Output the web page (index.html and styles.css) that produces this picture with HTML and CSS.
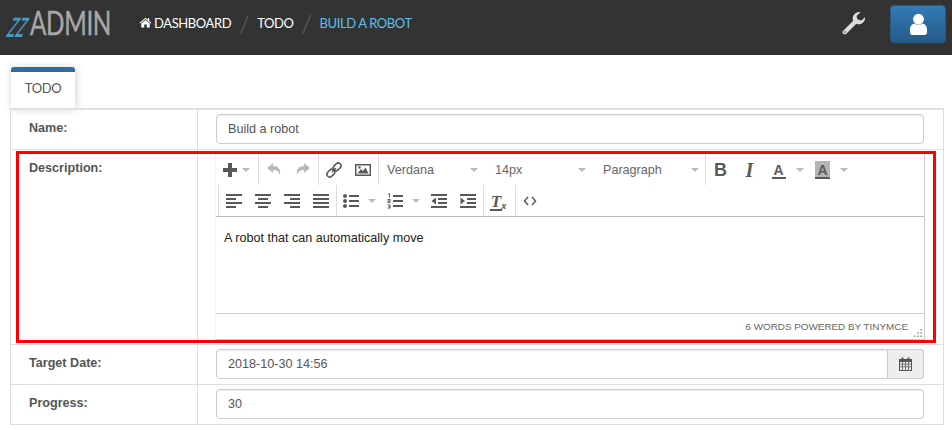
FILE: index.html
```html
<!DOCTYPE html>
<html lang="en">
<head>
    <meta charset="UTF-8">
    <title>Build a robot</title>
    <link rel="stylesheet" href="styles.css">
</head>
<body>
    <div class="navbar">
        <div class="logo"><span class="logo-zz">zz</span><span class="logo-admin">ADMIN</span></div>
        <ul class="crumbs">
            <li class="home-crumb">
                <svg class="home" viewBox="0 0 16 14"><path d="M8 1 L0.5 7.3 L1.3 8.3 L8 2.7 L14.7 8.3 L15.5 7.3 L12.8 5 V1.5 H11 V3.5 Z M8 3.8 L2.6 8.3 V13.5 H6.4 V9.6 H9.6 V13.5 H13.4 V8.3 Z" fill="#fff"/></svg>
                <span>DASHBOARD</span>
            </li>
            <li class="slash">/</li>
            <li>TODO</li>
            <li class="slash">/</li>
            <li class="active">BUILD A ROBOT</li>
        </ul>
        <svg class="wrench" viewBox="0 0 24 24">
            <path d="M2.800 21.200 L12.500 11.500" stroke="#ddd" stroke-width="4.400" stroke-linecap="round"/>
            <path d="M16.500 1 A6.500 6.500 0 0 0 11 9.500 L14.500 13 A6.500 6.500 0 0 0 23 6 L19.500 9.500 L15.500 8.500 L14.500 5 L18.500 1.300 A6.500 6.500 0 0 0 16.500 1 Z" fill="#ddd"/>
            <circle cx="3" cy="21" r="0.900" fill="#666"/>
        </svg>
        <button class="user-btn">
            <svg viewBox="0 0 20 24" width="19" height="23"><circle cx="10" cy="6.5" r="5.7" fill="#fff"/><path d="M1 18 C1 14 3 11.5 5.5 11 C8 13 12 13 14.5 11 C17 11.500 19 14 19 18 V20 C19 22 18 23 16 23 H4 C2 23 1 22 1 20 Z" fill="#fff"/></svg>
        </button>
    </div>

    <div class="tabs"><div class="tab">TODO</div></div>

    <div class="form-table">
        <div class="row">
            <div class="label">Name:</div>
            <div class="field"><input class="input" value="Build a robot"></div>
        </div>

        <div class="row row-desc">
            <div class="label">Description:</div>
            <div class="field">
                <div class="editor">
                    <div class="toolbar">
                        <div class="tb-row">
                            <div class="group g-plus">
                                <span class="btn">
                                    <svg class="ico" viewBox="0 0 16 16"><path d="M6 1h4v5h5v4h-5v5H6v-5H1V6h5z"/></svg>
                                </span>
                                <span class="caret"></span>
                            </div>
                            <div class="group g-pair">
                                <span class="btn"><svg class="ico faded" viewBox="0 0 16 16"><path d="M1 6 L7 1 V4 C12 4 15 7 14 13 C13 9.500 11 8 7 8 V11 Z"/></svg></span>
                                <span class="btn"><svg class="ico faded" viewBox="0 0 16 16"><path d="M15 6 L9 1 V4 C4 4 1 7 2 13 C3 9.500 5 8 9 8 V11 Z"/></svg></span>
                            </div>
                            <div class="group g-pair">
                                <span class="btn"><svg class="ico" viewBox="0 0 16 16"><g fill="none" stroke="#595959" stroke-width="1.600"><rect x="7" y="2.200" width="8.500" height="5.600" rx="2.700" transform="rotate(-45 11 5)"/><rect x="0.500" y="8.200" width="8.500" height="5.600" rx="2.700" transform="rotate(-45 5 11)"/><path d="M6 10 L10 6"/></g></svg></span>
                                <span class="btn"><svg class="ico" viewBox="0 0 16 16"><path fill-rule="evenodd" d="M0 2h16v12H0z M1.500 3.500v9h13v-9z"/><path d="M2.500 11.500 L6 7 L8 9 L10.500 5.500 L13.500 11.500 Z"/><circle cx="4.500" cy="5.500" r="1.200"/></svg></span>
                            </div>
                            <div class="group g-selects">
                                <div class="select s-font">Verdana<span class="caret"></span></div>
                                <div class="select s-size">14px<span class="caret"></span></div>
                                <div class="select s-block">Paragraph<span class="caret"></span></div>
                            </div>
                            <div class="group g-format no-sep">
                                <span class="btn glyph bold">B</span>
                                <span class="btn glyph ital">I</span>
                                <span class="btn glyph color">A</span>
                                <span class="caret c-tight"></span>
                                <span class="btn glyph back">A</span>
                                <span class="caret c-tight"></span>
                            </div>
                        </div>
                        <div class="tb-row tb-second">
                            <div class="group">
                                <span class="btn"><svg class="ico" viewBox="0 0 16 16"><path d="M0 1h16v2H0zM0 5h10v2H0zM0 9h16v2H0zM0 13h10v2H0z"/></svg></span>
                                <span class="btn"><svg class="ico" viewBox="0 0 16 16"><path d="M0 1h16v2H0zM3 5h10v2H3zM0 9h16v2H0zM3 13h10v2H3z"/></svg></span>
                                <span class="btn"><svg class="ico" viewBox="0 0 16 16"><path d="M0 1h16v2H0zM6 5h10v2H6zM0 9h16v2H0zM6 13h10v2H6z"/></svg></span>
                                <span class="btn"><svg class="ico" viewBox="0 0 16 16"><path d="M0 1h16v2H0zM0 5h16v2H0zM0 9h16v2H0zM0 13h16v2H0z"/></svg></span>
                            </div>
                            <div class="group">
                                <span class="btn"><svg class="ico" viewBox="0 0 16 16"><path d="M6 2h10v2H6zM6 7h10v2H6zM6 12h10v2H6z"/><circle cx="2" cy="3" r="2"/><circle cx="2" cy="8" r="2"/><circle cx="2" cy="13" r="2"/></svg></span>
                                <span class="caret c-tight"></span>
                                <span class="btn"><svg class="ico" viewBox="0 0 16 16"><path d="M6 2h10v2H6zM6 7h10v2H6zM6 12h10v2H6z"/><path d="M1 0.500h2v4H2V1.500H1zM0.500 6h3v2.500h-2V9h2v1h-3V7.500h2V7h-2zM0.500 11.500h3v4h-3v-1h2V14h-1v-1h1v-.5h-2z"/></svg></span>
                                <span class="caret c-tight"></span>
                                <span class="btn"><svg class="ico" viewBox="0 0 16 16"><path d="M0 1h16v2H0zM7 5h9v2H7zM7 9h9v2H7zM0 13h16v2H0zM5 4.500v7L0.500 8z"/></svg></span>
                                <span class="btn"><svg class="ico" viewBox="0 0 16 16"><path d="M0 1h16v2H0zM7 5h9v2H7zM7 9h9v2H7zM0 13h16v2H0zM0.500 4.500v7L5 8z"/></svg></span>
                            </div>
                            <div class="group g-clear">
                                <span class="btn glyph clear"><span class="clear-t">T</span><small>x</small></span>
                            </div>
                            <div class="group no-sep">
                                <span class="btn"><svg class="ico" viewBox="0 0 16 16"><path d="M6 4 L2.500 8 L6 12 M10 4 L13.500 8 L10 12" fill="none" stroke="#595959" stroke-width="1.500"/></svg></span>
                            </div>
                        </div>
                    </div>
                    <div class="edit-area">A robot that can automatically move</div>
                    <div class="statusbar">
                        <span>6 WORDS POWERED BY TINYMCE</span>
                        <svg class="grip" viewBox="0 0 10 10"><path d="M8 0h2v2H8zM8 4h2v2H8zM8 8h2v2H8zM4 4h2v2H4zM4 8h2v2H4zM0 8h2v2H0z"/></svg>
                    </div>
                </div>
            </div>
            <div class="highlight"></div>
        </div>

        <div class="row">
            <div class="label">Target Date:</div>
            <div class="field">
                <div class="input-group">
                    <input class="input date" value="2018-10-30 14:56">
                    <span class="addon"><svg viewBox="0 0 13 14" width="13" height="14"><path fill-rule="evenodd" d="M0 2h2.500V0.500h2V2h4V0.500h2V2H13v12H0z M1 5v1.800h2.200V5z M4 5v1.800h2.200V5z M7 5v1.800h2.200V5z M10 5v1.800h2V5z M1 7.600v1.800h2.200V7.600z M4 7.600v1.800h2.200V7.600z M7 7.600v1.800h2.200V7.600z M10 7.600v1.800h2V7.600z M1 10.200V13h2.200v-2.800z M4 10.200V13h2.200v-2.800z M7 10.200V13h2.200v-2.800z M10 10.200V13h2v-2.800z" fill="#555"/></svg></span>
                </div>
            </div>
        </div>

        <div class="row">
            <div class="label">Progress:</div>
            <div class="field"><input class="input" value="30"></div>
        </div>
    </div>
</body>
</html>
```

FILE: styles.css
```css
body {
    margin: 0;
    font-family: "Liberation Sans", Arial, sans-serif;
    font-size: 12.6px;
    color: #555;
    background: #fff;
    overflow: hidden;
}

/* top bar */
.navbar {
    display: flex;
    align-items: center;
    height: 55px;
    background: #333;
}
.logo {
    display: flex;
    align-items: center;
    width: 139px;
    padding-left: 11px;
    box-sizing: border-box;
    height: 46px;
    margin-top: -9px;
}
.logo-zz {
    font-family: Lato, sans-serif;
    font-size: 19px;
    line-height: 24px;
    color: #4a9cc7;
    flex: none;
    margin-right: 2px;
    transform: skewX(-22deg) scaleY(2);
}
.logo-admin {
    font-family: Lato, sans-serif;
    font-size: 32px;
    line-height: 34px;
    letter-spacing: -0.5px;
    color: #a8a8a8;
    -webkit-text-stroke: 0.4px #a8a8a8;
    transform: scaleX(0.76);
    transform-origin: left center;
}
.crumbs {
    display: flex;
    align-items: center;
    list-style: none;
    margin: -10px 0 0;
    padding: 0;
    font-family: Lato, sans-serif;
    font-size: 13px;
    letter-spacing: -0.4px;
    color: #fff;
    flex: 1;
}
.crumbs .active { color: #5bc0f0; }
.crumbs .slash {
    color: #666;
    font-size: 24px;
    font-weight: 300;
    width: 26px;
    text-align: center;
}
.home-crumb {
    display: flex;
    align-items: center;
    gap: 2px;
}
.home {
    width: 13px;
    height: 11px;
}
.wrench {
    width: 24px;
    height: 24px;
    margin: -10px 24px 0 0;
}
.user-btn {
    width: 56px;
    height: 38px;
    margin: -7px 6px 0 0;
    padding: 0;
    border: 1px solid #265a88;
    border-radius: 4px;
    background: linear-gradient(#337ab7, #265a88);
    display: flex;
    align-items: center;
    justify-content: center;
}

/* tab */
.tabs {
    padding: 12px 0 0 11px;
    height: 41px;
}
.tab {
    width: 64px;
    height: 36px;
    border-top: 5px solid #2e6da4;
    border-radius: 3px 3px 0 0;
    background: #fff;
    box-shadow: 1px 1px 8px rgba(0, 0, 0, 0.2);
    font-family: Lato, sans-serif;
    font-size: 13px;
    letter-spacing: -0.4px;
    line-height: 32px;
    text-align: center;
    color: #555;
    position: relative;
}

/* form */
.form-table {
    position: relative;
    margin: 0 8px 0 10px;
    border: 1px solid #ddd;
    border-top: 2px solid #e0e0e0;
}
.row {
    display: flex;
    position: relative;
    border-bottom: 1px solid #ddd;
}
.row:last-child { border-bottom: 0; }
.label {
    width: 187px;
    flex: none;
    box-sizing: border-box;
    padding: 10px 0 0 18px;
    border-right: 1px solid #ddd;
    font-weight: bold;
    color: #555;
    line-height: 16px;
}
.field {
    flex: 1;
    padding: 4px 19px 5px 18px;
    min-width: 0;
}
.row-desc .field { padding: 3px 18px 4px 18px; }
.input {
    display: block;
    box-sizing: border-box;
    width: 100%;
    height: 30px;
    padding: 0 11px;
    border: 1px solid #ccc;
    border-radius: 4px;
    font: 12.6px "Liberation Sans", Arial, sans-serif;
    color: #555;
    box-shadow: inset 0 1px 1px rgba(0, 0, 0, 0.075);
}
.input-group { display: flex; }
.input.date {
    flex: 1;
    border-radius: 4px 0 0 4px;
}
.addon {
    width: 36px;
    height: 30px;
    box-sizing: border-box;
    border: 1px solid #ccc;
    border-left: 0;
    border-radius: 0 4px 4px 0;
    background: #eee;
    display: flex;
    align-items: center;
    justify-content: center;
}

/* editor */
.editor {
    box-sizing: border-box;
    border-right: 1px solid #ccc;
    border-bottom: 1px solid #ccc;
    box-shadow: -1px 0 0 #f2f2f2;
    height: 187px;
    display: flex;
    flex-direction: column;
}
.toolbar {
    box-sizing: border-box;
    height: 64px;
    border-bottom: 1px solid #bbb;
    flex: none;
}
.tb-row {
    display: flex;
    height: 32px;
}
.tb-row:first-child .group { padding-top: 2px; }
.tb-second {
    height: 31px;
    padding-left: 2px;
}
.tb-second .group:first-child {
    border-left: 1px solid #ddd;
    padding-left: 0.5px;
}
.group {
    box-sizing: border-box;
    display: flex;
    align-items: center;
    border-right: 1px solid #ddd;
}
.no-sep { border-right: 0; }
.g-plus { width: 43px; }
.g-pair { width: 60px; }
.g-clear { width: 32px; }
.btn {
    display: flex;
    align-items: center;
    justify-content: center;
    width: 29px;
    height: 30px;
    flex: none;
}
.ico {
    width: 16px;
    height: 16px;
    fill: #595959;
}
.faded { fill: #b8b8b8; }
.g-plus .btn { width: 26px; margin-left: 1px; }
.g-plus .caret { margin-left: -1px; }
.caret {
    display: inline-block;
    width: 0;
    height: 0;
    border-left: 4px solid transparent;
    border-right: 4px solid transparent;
    border-top: 4px solid #bbb;
}
.c-tight { margin: 0 5px 0 2px; }
.g-format .c-tight { margin: 0 4px 0 3px; }
.g-selects { width: 327px; color: #666; }
.select {
    display: flex;
    align-items: center;
    justify-content: space-between;
    box-sizing: border-box;
    width: 108px;
    padding: 0 9px 0 8px;
}
.s-block { padding-right: 4px; }
.glyph { color: #595959; }
.bold { font-weight: bold; font-size: 18px; }
.ital {
    font-family: "Liberation Serif", serif;
    font-style: italic;
    font-weight: bold;
    font-size: 20px;
}
.color {
    height: 18px;
    font-size: 14px;
    font-weight: bold;
    background: linear-gradient(#595959, #595959) center bottom / 14px 2px no-repeat;
}
.back {
    height: 18px;
    font-size: 14px;
    font-weight: bold;
    background: linear-gradient(#595959, #595959) center bottom / 15px 2px no-repeat,
        linear-gradient(#b5b5b5, #b5b5b5) center / 15px 18px no-repeat;
}
.clear {
    font-family: "Liberation Serif", serif;
    font-style: italic;
    font-weight: bold;
    align-items: flex-start;
}
.clear-t {
    font-size: 17px;
    line-height: 15px;
    margin-top: 8px;
    border-bottom: 2px solid #595959;
    padding: 0 1px;
}
.clear small {
    font-family: "Liberation Sans", sans-serif;
    font-size: 9px;
    font-weight: bold;
    margin: 15px 0 0 -1px;
}
.edit-area {
    flex: 1;
    padding: 13px 8px;
    color: #222;
    line-height: 16px;
}
.statusbar {
    display: flex;
    align-items: center;
    justify-content: flex-end;
    flex: none;
    height: 25px;
    border-top: 1px solid #ccc;
    font-size: 9.9px;
    color: #666;
    padding-right: 16px;
    position: relative;
}
.grip {
    position: absolute;
    right: 2px;
    bottom: 2px;
    width: 8px;
    height: 8px;
    fill: #999;
}

/* red annotation box */
.highlight {
    position: absolute;
    top: 1px;
    bottom: 1px;
    left: 5px;
    right: 7px;
    border: 3px solid #f00;
    pointer-events: none;
}
```
